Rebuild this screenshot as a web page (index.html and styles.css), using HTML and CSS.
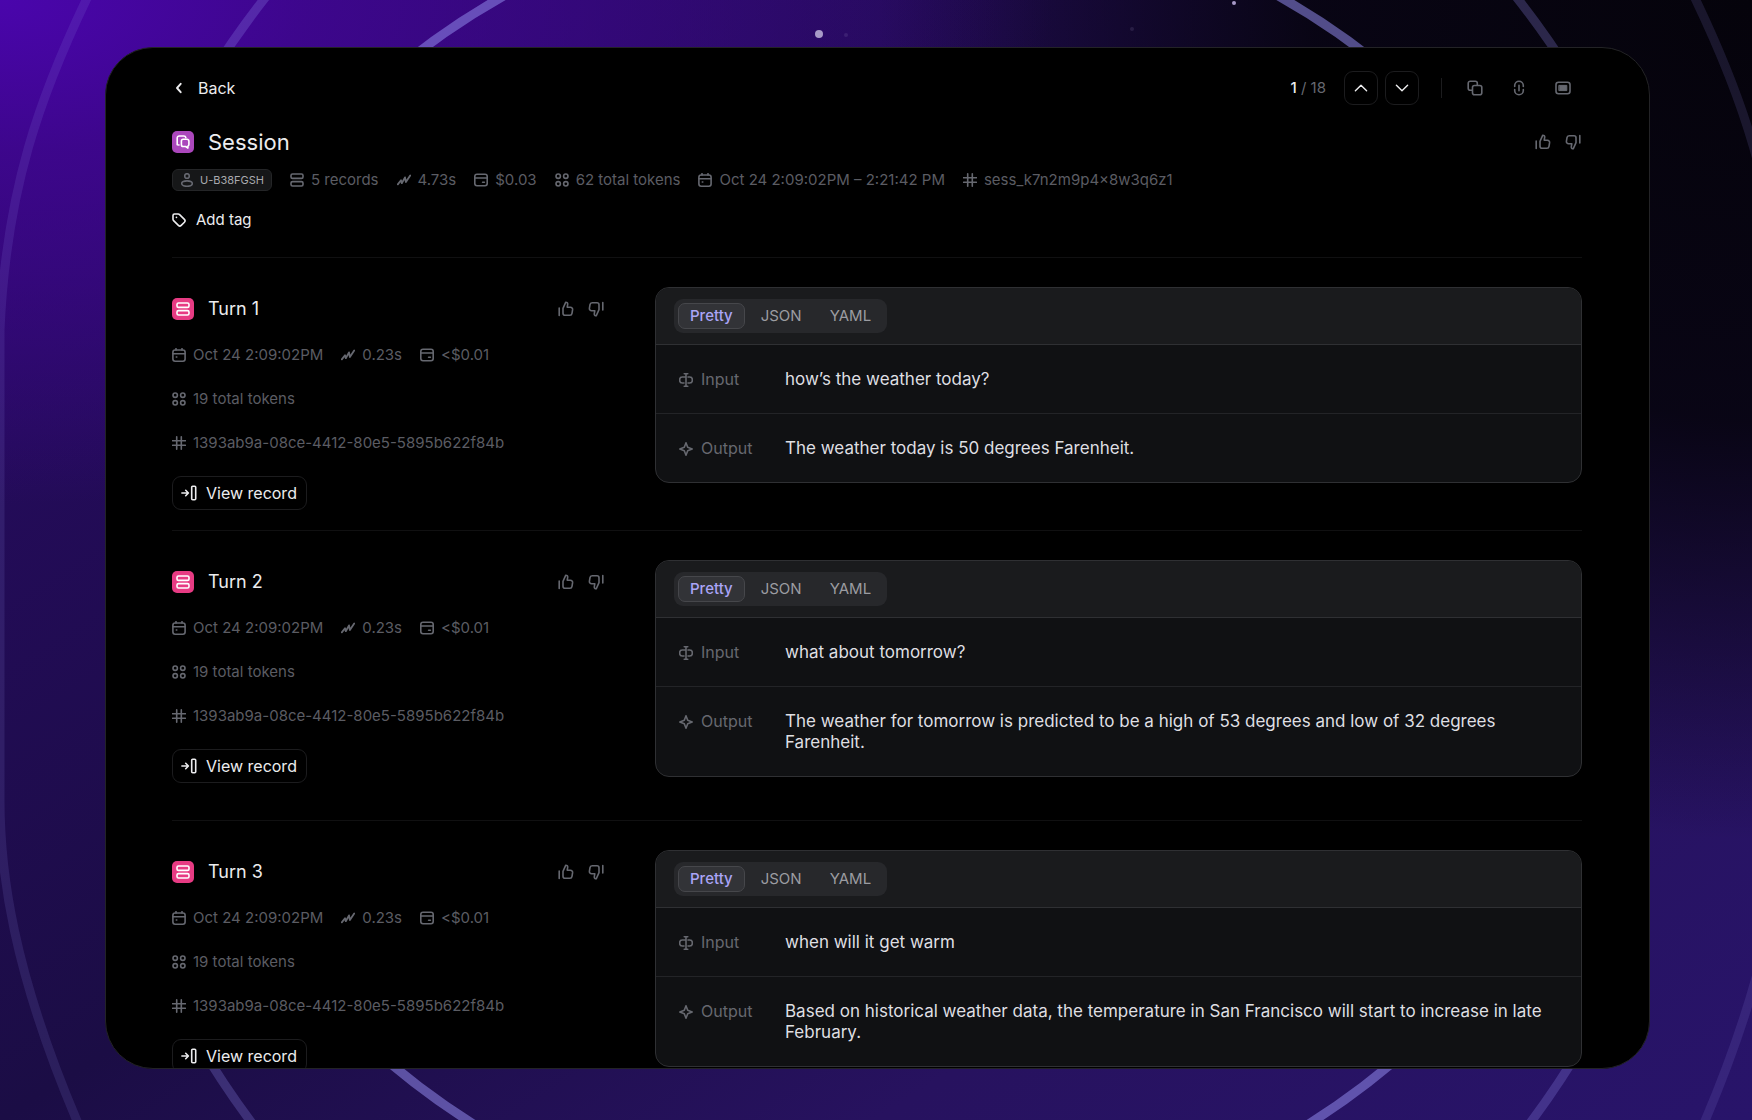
FILE: index.html
```html
<!DOCTYPE html>
<html lang="en">
<head>
    <meta charset="UTF-8">
    <meta name="viewport" content="width=device-width, initial-scale=1.0">
    <title>Session</title>
    <link rel="stylesheet" href="styles.css">
</head>
<body>
    <!-- Icon set -->
    <svg class="sprite" aria-hidden="true">
        <symbol id="i-left" viewBox="0 0 14 14"><path d="M8.7 2.8 5 7l3.7 4.2" stroke-width="1.9"/></symbol>
        <symbol id="i-up" viewBox="0 0 14 14"><path d="M1.4 9.8 7 4.2l5.600 5.600" stroke-width="1.4"/></symbol>
        <symbol id="i-down" viewBox="0 0 14 14"><path d="M1.4 4.2 7 9.8l5.600-5.600" stroke-width="1.4"/></symbol>
        <symbol id="i-copy" viewBox="0 0 16 16"><rect x="5.500" y="5.500" width="9.300" height="9.300" rx="2"/><path d="M5.200 10.300H3.200a2 2 0 0 1-2-2V3.200a2 2 0 0 1 2-2h5.100a2 2 0 0 1 2 2v2"/></symbol>
        <symbol id="i-link" viewBox="0 0 16 16"><path d="M3.700 6.400V5.500a4.300 4.300 0 0 1 8.600 0v.9M3.700 9.600v.9a4.300 4.300 0 0 0 8.600 0v-.9M8 5.200v5.600"/></symbol>
        <symbol id="i-screen" viewBox="0 0 16 16"><rect x="1" y="2.200" width="14" height="11.600" rx="2.500"/><rect x="4.200" y="5.400" width="7.600" height="5.200" fill="currentColor" stroke-width="1"/></symbol>
        <symbol id="i-thumb" viewBox="0 0 16 16"><path d="M1.200 7v7.500M5 7.400 7.800 1.200c1.300 0 2.100 1 1.900 2.200l-.5 2.800h3.200a2.200 2.200 0 0 1 2.200 2.500l-.6 3.700a2.200 2.200 0 0 1-2.200 1.900H7a2 2 0 0 1-2-2z"/></symbol>
        <symbol id="i-chat" viewBox="0 0 14 14"><path d="M3 10 1.200 9.800V3a2 2 0 0 1 2-2h4.600a2 2 0 0 1 2 1.400M7.200 4.300h3.900A1.800 1.800 0 0 1 12.900 6.100v3.300a1.800 1.800 0 0 1-1 1.700v2l-2.200-1.600H7.200a1.800 1.800 0 0 1-1.800-1.800V6.100a1.800 1.800 0 0 1 1.800-1.800z"/></symbol>
        <symbol id="i-rows" viewBox="0 0 14 14"><rect x="1" y="1" width="12" height="4.400" rx="1.500"/><rect x="1" y="8.600" width="12" height="4.400" rx="1.500"/></symbol>
        <symbol id="i-user" viewBox="0 0 14 14"><circle cx="7" cy="3" r="2.300"/><ellipse cx="7" cy="10.600" rx="5.300" ry="2.700"/></symbol>
        <symbol id="i-speed" viewBox="0 0 14 14"><path d="m.8 11.400 3.200-4.200.8 3 3.200-5.800.9 4.600L13.200 2.400" stroke-width="1.800"/></symbol>
        <symbol id="i-cost" viewBox="0 0 14 14"><rect x=".8" y="1.300" width="12.400" height="11.400" rx="2.200"/><path d="M1 5h12M8.600 9.300h1.800"/></symbol>
        <symbol id="i-tokens" viewBox="0 0 14 14"><circle cx="3.200" cy="3.200" r="2.200"/><circle cx="10.800" cy="3.200" r="2.200"/><circle cx="3.200" cy="10.800" r="2.200"/><circle cx="10.800" cy="10.800" r="2.200"/></symbol>
        <symbol id="i-date" viewBox="0 0 14 14"><rect x=".9" y="2" width="12.200" height="11.200" rx="2.200"/><path d="M1 5.800h12M4 .6V2M10 .6V2M4.300 9h.5"/></symbol>
        <symbol id="i-hash" viewBox="0 0 14 14"><path d="M.6 4.700h12.800M.6 9.300h12.800M4.700.8v12.400M9.300.8v12.400"/></symbol>
        <symbol id="i-tag" viewBox="0 0 14 14"><path d="M1 2.500A1.500 1.500 0 0 1 2.500 1h3.700a2 2 0 0 1 1.400.6l4.800 4.800a2 2 0 0 1 0 2.800l-3.200 3.200a2 2 0 0 1-2.800 0L1.600 7.600A2 2 0 0 1 1 6.200zM4.400 4.400h.1"/></symbol>
        <symbol id="i-open" viewBox="0 0 16 16"><path d="M.9 8h6.300M4.700 5.300 7.400 8l-2.700 2.700"/><rect x="10.700" y="1.200" width="4" height="13.600" rx="1"/></symbol>
        <symbol id="i-input" viewBox="0 0 14 14"><path d="M5.300.7h3.400M5.300 13.300h3.400M7 .7v12.600M5 10H3.200a2.500 2.500 0 0 1-2.500-2.500v-1A2.500 2.500 0 0 1 3.200 4H7M9 4h1.800a2.500 2.500 0 0 1 2.500 2.500v1a2.500 2.500 0 0 1-2.500 2.500H9"/></symbol>
        <symbol id="i-spark" viewBox="0 0 14 14"><path d="M7 .8 8.700 5.300 13.200 7 8.700 8.700 7 13.200 5.300 8.700.8 7l4.500-1.700z"/></symbol>
    </svg>

    <svg class="backdrop" viewBox="0 0 1752 1120" preserveAspectRatio="none" aria-hidden="true">
        <clipPath id="edges"><path d="M0 0h1752v80H0zM0 1040h1752v80H0z"/></clipPath>
        <g class="ring ring-outer">
            <path d="M90-8C40 95 6 190 0 330V800C0 870 12 970 80 1128"/>
            <path d="M1692-8C1742 95 1776 190 1782 330V800C1782 870 1770 970 1702 1128"/>
        </g>
        <g clip-path="url(#edges)">
            <ellipse class="ring ring-middle" cx="891" cy="569" rx="820" ry="884"/>
            <ellipse class="ring ring-inner" cx="891" cy="569" rx="738" ry="673"/>
        </g>
        <circle class="star" cx="819" cy="34" r="4"/>
        <circle class="star" cx="1234" cy="3" r="2"/>
        <circle class="star star-dim" cx="846" cy="35" r="2"/>
        <circle class="star star-dim" cx="1132" cy="29" r="2"/>
    </svg>

    <main class="card">
        <header class="session">
            <div class="topbar">
                <a class="back" href="#"><svg class="icon"><use href="#i-left"/></svg>Back</a>
                <div class="toolbar">
                    <p class="counter"><strong>1</strong> / 18</p>
                    <button class="step" aria-label="Previous session"><svg class="icon"><use href="#i-up"/></svg></button>
                    <button class="step" aria-label="Next session"><svg class="icon"><use href="#i-down"/></svg></button>
                    <span class="divider"></span>
                    <div class="actions">
                        <button class="plain" aria-label="Copy"><svg class="icon-lg"><use href="#i-copy"/></svg></button>
                        <button class="plain" aria-label="Copy link"><svg class="icon-lg"><use href="#i-link"/></svg></button>
                        <button class="plain" aria-label="Full screen"><svg class="icon-lg"><use href="#i-screen"/></svg></button>
                    </div>
                </div>
            </div>

            <div class="heading">
                <span class="mark mark-session"><svg class="icon"><use href="#i-chat"/></svg></span>
                <h1>Session</h1>
                <div class="votes">
                    <button class="plain" aria-label="Good session"><svg class="icon-lg"><use href="#i-thumb"/></svg></button>
                    <button class="plain flip" aria-label="Bad session"><svg class="icon-lg"><use href="#i-thumb"/></svg></button>
                </div>
            </div>

            <ul class="meta">
                <li class="badge"><svg class="icon"><use href="#i-user"/></svg>U-B38FGSH</li>
                <li><svg class="icon"><use href="#i-rows"/></svg>5 records</li>
                <li><svg class="icon"><use href="#i-speed"/></svg>4.73s</li>
                <li><svg class="icon"><use href="#i-cost"/></svg>$0.03</li>
                <li><svg class="icon"><use href="#i-tokens"/></svg>62 total tokens</li>
                <li><svg class="icon"><use href="#i-date"/></svg>Oct 24 2:09:02PM – 2:21:42 PM</li>
                <li><svg class="icon"><use href="#i-hash"/></svg>sess_k7n2m9p4×8w3q6z1</li>
            </ul>

            <button class="add-tag"><svg class="icon"><use href="#i-tag"/></svg>Add tag</button>
        </header>

        <section class="turn">
            <div class="summary">
                <div class="heading">
                    <span class="mark"><svg class="icon"><use href="#i-rows"/></svg></span>
                    <h2>Turn 1</h2>
                    <div class="votes">
                        <button class="plain" aria-label="Good answer"><svg class="icon-lg"><use href="#i-thumb"/></svg></button>
                        <button class="plain flip" aria-label="Bad answer"><svg class="icon-lg"><use href="#i-thumb"/></svg></button>
                    </div>
                </div>
                <ul class="meta">
                    <li><svg class="icon"><use href="#i-date"/></svg>Oct 24 2:09:02PM</li>
                    <li><svg class="icon"><use href="#i-speed"/></svg>0.23s</li>
                    <li><svg class="icon"><use href="#i-cost"/></svg>&lt;$0.01</li>
                    <li><svg class="icon"><use href="#i-tokens"/></svg>19 total tokens</li>
                    <li><svg class="icon"><use href="#i-hash"/></svg>1393ab9a-08ce-4412-80e5-5895b622f84b</li>
                </ul>
                <button class="view"><svg class="icon-lg"><use href="#i-open"/></svg>View record</button>
            </div>
            <div class="panel">
                <div class="panel-head">
                    <div class="tabs">
                        <button class="tab active">Pretty</button>
                        <button class="tab">JSON</button>
                        <button class="tab">YAML</button>
                    </div>
                </div>
                <dl>
                    <div class="row">
                        <dt><svg class="icon"><use href="#i-input"/></svg>Input</dt>
                        <dd>how’s the weather today?</dd>
                    </div>
                    <div class="row">
                        <dt><svg class="icon"><use href="#i-spark"/></svg>Output</dt>
                        <dd>The weather today is 50 degrees Farenheit.</dd>
                    </div>
                </dl>
            </div>
        </section>

        <section class="turn">
            <div class="summary">
                <div class="heading">
                    <span class="mark"><svg class="icon"><use href="#i-rows"/></svg></span>
                    <h2>Turn 2</h2>
                    <div class="votes">
                        <button class="plain" aria-label="Good answer"><svg class="icon-lg"><use href="#i-thumb"/></svg></button>
                        <button class="plain flip" aria-label="Bad answer"><svg class="icon-lg"><use href="#i-thumb"/></svg></button>
                    </div>
                </div>
                <ul class="meta">
                    <li><svg class="icon"><use href="#i-date"/></svg>Oct 24 2:09:02PM</li>
                    <li><svg class="icon"><use href="#i-speed"/></svg>0.23s</li>
                    <li><svg class="icon"><use href="#i-cost"/></svg>&lt;$0.01</li>
                    <li><svg class="icon"><use href="#i-tokens"/></svg>19 total tokens</li>
                    <li><svg class="icon"><use href="#i-hash"/></svg>1393ab9a-08ce-4412-80e5-5895b622f84b</li>
                </ul>
                <button class="view"><svg class="icon-lg"><use href="#i-open"/></svg>View record</button>
            </div>
            <div class="panel">
                <div class="panel-head">
                    <div class="tabs">
                        <button class="tab active">Pretty</button>
                        <button class="tab">JSON</button>
                        <button class="tab">YAML</button>
                    </div>
                </div>
                <dl>
                    <div class="row">
                        <dt><svg class="icon"><use href="#i-input"/></svg>Input</dt>
                        <dd>what about tomorrow?</dd>
                    </div>
                    <div class="row">
                        <dt><svg class="icon"><use href="#i-spark"/></svg>Output</dt>
                        <dd>The weather for tomorrow is predicted to be a high of 53 degrees and low of 32 degrees Farenheit.</dd>
                    </div>
                </dl>
            </div>
        </section>

        <section class="turn">
            <div class="summary">
                <div class="heading">
                    <span class="mark"><svg class="icon"><use href="#i-rows"/></svg></span>
                    <h2>Turn 3</h2>
                    <div class="votes">
                        <button class="plain" aria-label="Good answer"><svg class="icon-lg"><use href="#i-thumb"/></svg></button>
                        <button class="plain flip" aria-label="Bad answer"><svg class="icon-lg"><use href="#i-thumb"/></svg></button>
                    </div>
                </div>
                <ul class="meta">
                    <li><svg class="icon"><use href="#i-date"/></svg>Oct 24 2:09:02PM</li>
                    <li><svg class="icon"><use href="#i-speed"/></svg>0.23s</li>
                    <li><svg class="icon"><use href="#i-cost"/></svg>&lt;$0.01</li>
                    <li><svg class="icon"><use href="#i-tokens"/></svg>19 total tokens</li>
                    <li><svg class="icon"><use href="#i-hash"/></svg>1393ab9a-08ce-4412-80e5-5895b622f84b</li>
                </ul>
                <button class="view"><svg class="icon-lg"><use href="#i-open"/></svg>View record</button>
            </div>
            <div class="panel">
                <div class="panel-head">
                    <div class="tabs">
                        <button class="tab active">Pretty</button>
                        <button class="tab">JSON</button>
                        <button class="tab">YAML</button>
                    </div>
                </div>
                <dl>
                    <div class="row">
                        <dt><svg class="icon"><use href="#i-input"/></svg>Input</dt>
                        <dd>when will it get warm</dd>
                    </div>
                    <div class="row">
                        <dt><svg class="icon"><use href="#i-spark"/></svg>Output</dt>
                        <dd>Based on historical weather data, the temperature in San Francisco will start to increase in late February.</dd>
                    </div>
                </dl>
            </div>
        </section>
    </main>
</body>
</html>
```
FILE: styles.css
```css
:root {
    --text: #ececee;
    --muted: #5b5c63;
    --icon: #666870;
    --line: #1c1c1e;
    --panel-line: #2f3033;
}

* {
    margin: 0;
    padding: 0;
    box-sizing: border-box;
}

body {
    height: 100vh;
    padding: 47px 102px 51px 105px;
    overflow: hidden;
    font-family: Inter, sans-serif;
    font-size: 15px;
    line-height: 20px;
    color: var(--text);
    background:
        radial-gradient(ellipse 60% 45% at 0% 0%, #4a05ac 0%, rgba(66, 5, 150, 0.8) 30%, rgba(40, 8, 100, 0) 100%),
        radial-gradient(ellipse 50% 75% at 100% 0%, #05030b 0%, rgba(6, 4, 14, 0.9) 50%, rgba(8, 5, 20, 0) 100%),
        linear-gradient(to top left, #28146a 0%, #27125f 25%, #1b0d45 50%, #2a0a68 100%);
}

button {
    font: inherit;
    color: inherit;
    background: none;
    border: none;
    cursor: pointer;
}

ul {
    list-style: none;
}

.sprite {
    position: absolute;
    width: 0;
    height: 0;
}

.backdrop {
    position: absolute;
    inset: 0;
    width: 100%;
    height: 100%;
}

.ring {
    fill: none;
    stroke: #8d86e6;
    stroke-width: 9;
}

.ring-outer {
    stroke-opacity: 0.15;
}

.ring-middle {
    stroke-opacity: 0.28;
}

.ring-inner {
    stroke-opacity: 0.56;
}

.star {
    fill: #a89ac8;
}

.star-dim {
    fill-opacity: 0.15;
}

.icon,
.icon-lg {
    flex: none;
    display: block;
    width: 14px;
    height: 14px;
    fill: none;
    stroke: currentColor;
    stroke-width: 1.6;
    stroke-linecap: round;
    stroke-linejoin: round;
}

.icon-lg {
    width: 16px;
    height: 16px;
}

.card {
    position: relative;
    height: 100%;
    padding: 23px 67px 0 66px;
    overflow: hidden;
    background-color: #000;
    border: 1px solid #232326;
    border-radius: 48px;
}

/* Session header */
.session {
    padding-bottom: 27px;
}

.topbar,
.toolbar,
.actions,
.heading,
.votes,
.back,
.add-tag {
    display: flex;
    align-items: center;
}

.topbar {
    justify-content: space-between;
    margin-bottom: 23px;
}

.back {
    gap: 12px;
    font-size: 16px;
    color: var(--text);
    text-decoration: none;
}

.counter {
    margin-right: 18px;
    color: var(--icon);
}

.counter strong {
    font-weight: 500;
    color: var(--text);
}

.step {
    display: grid;
    place-items: center;
    width: 34px;
    height: 34px;
    margin-right: 7px;
    border: 1px solid var(--line);
    border-radius: 9px;
}

.divider {
    width: 1px;
    height: 20px;
    margin: 0 25px 0 15px;
    background-color: var(--line);
}

.actions {
    gap: 28px;
    padding-right: 11px;
}

.plain {
    color: var(--icon);
}

.flip {
    transform: rotate(180deg);
}

.heading {
    gap: 14px;
}

.heading h1,
.heading h2 {
    font-weight: 400;
}

.heading h1 {
    font-size: 22px;
    line-height: 28px;
}

.heading h2 {
    font-size: 18px;
    line-height: 24px;
}

.mark {
    display: grid;
    place-items: center;
    width: 22px;
    height: 22px;
    color: #fff;
    background-color: #e73b83;
    border-radius: 5px;
}

.mark-session {
    background-color: #ab47bc;
}

.votes {
    gap: 14px;
    margin-left: auto;
    padding-right: 1px;
}

.meta {
    display: flex;
    flex-wrap: wrap;
    align-items: center;
    gap: 24px 18px;
    color: var(--muted);
}

.meta li {
    display: flex;
    align-items: center;
    gap: 7px;
}

.meta .icon {
    color: var(--icon);
}

.session .meta {
    margin: 13px 0 19px;
}

.meta .badge {
    gap: 6px;
    padding: 0 7px;
    font-size: 11px;
    color: #a9aaae;
    background-color: #161718;
    border: 1px solid #242527;
    border-radius: 6px;
}

.add-tag {
    gap: 10px;
}

/* Turns */
.turn {
    display: grid;
    grid-template-columns: 433px 1fr;
    gap: 50px;
    align-items: start;
    padding-top: 29px;
    border-top: 1px solid #101011;
}

.summary {
    padding: 10px 0 20px;
}

.summary .meta {
    margin: 24px 0 23px;
}

.view {
    display: flex;
    align-items: center;
    gap: 9px;
    height: 34px;
    padding: 0 9px 0 8px;
    font-size: 16px;
    border: 1px solid var(--line);
    border-radius: 9px;
}

.panel {
    margin-bottom: 43px;
    overflow: hidden;
    background-color: #101113;
    border: 1px solid var(--panel-line);
    border-radius: 14px;
}

.panel-head {
    display: flex;
    padding: 11px 18px;
    background-color: #1a1b1d;
    border-bottom: 1px solid var(--panel-line);
}

.tabs {
    display: flex;
    align-items: center;
    gap: 4px;
    height: 34px;
    padding: 0 4px;
    background-color: #27282b;
    border-radius: 9px;
}

.tab {
    height: 26px;
    padding: 0 11px;
    color: #9b9ca1;
    border: 1px solid transparent;
    border-radius: 7px;
}

.tab.active {
    font-weight: 500;
    color: #aaa5f7;
    background-color: #323337;
    border-color: #46474b;
}

.row {
    display: grid;
    grid-template-columns: 98px 1fr;
    gap: 8px;
    padding: 24px 24px 23px 23px;
    line-height: 21px;
}

.row + .row {
    border-top: 1px solid #232427;
}

.row dt {
    display: flex;
    align-items: center;
    gap: 8px;
    height: 21px;
    font-size: 16px;
    color: #66686f;
}

.row dd {
    font-size: 17px;
    color: #dfdfe2;
}
```
